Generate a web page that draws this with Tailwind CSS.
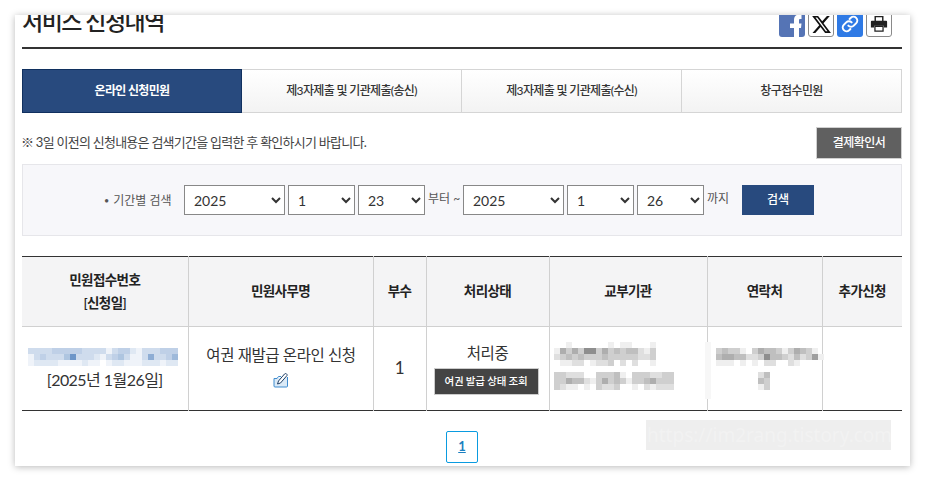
<!DOCTYPE html>
<html lang="ko">
<head>
    <meta charset="UTF-8">
    <title>서비스 신청내역</title>
    <script src="https://cdn.jsdelivr.net/npm/@tailwindcss/browser@4"></script>
</head>
<body class="bg-white w-[925px] h-[481px] overflow-hidden pt-[15px] pl-[15px] font-['Lato','Noto_Sans_CJK_KR',sans-serif] text-[#333]">
    <div class="relative w-[895px] h-[451px] overflow-hidden bg-white pl-[7px] pr-[8px] shadow-[0_1px_7px_rgba(0,0,0,0.28)]">

        <!-- Title and share icons -->
        <div class="flex justify-between h-[34px] border-b-2 border-[#333]">
            <h2 class="-mt-[11px] text-[23px] leading-[35px] font-medium tracking-[-1.5px] text-[#222]">서비스 신청내역</h2>
            <div class="flex gap-[3px] -mt-[4px] mr-[10px] h-[26px]">
                <div class="w-[26px] h-[26px] rounded-[3px] bg-[#5574b5] overflow-hidden">
                    <svg viewBox="0 0 26 26" class="w-[26px] h-[26px]"><path fill="#fff" d="M15 26V17h-4v-4.500h4V9c0-3.500 2-5.500 5-5.500h2.500V8h-1.500c-.8 0-1 .6-1 1.500v3h2.500l-.5 4.500h-2v9z"/></svg>
                </div>
                <div class="w-[26px] h-[26px] rounded-[3px] border border-[#8a8a8a] bg-white flex items-center justify-center">
                    <svg viewBox="0 0 24 24" class="w-[21px] h-[21px]"><path fill="#111" d="M18.200 2.200h3.300l-7.200 8.300 8.500 11.200h-6.700l-5.200-6.800-6 6.800H1.700l7.700-8.800L1.300 2.200h6.800l4.700 6.200zm-1.200 17.500h1.800L7.100 4.100H5.100z"/></svg>
                </div>
                <div class="w-[26px] h-[26px] rounded-[3px] bg-[#2f7ae5] flex items-center justify-center">
                    <svg viewBox="0 0 24 24" class="w-[20px] h-[20px]" fill="none" stroke="#fff" stroke-width="2.400" stroke-linecap="round"><path d="M10 14a4.500 4.500 0 0 0 6.500 0l3-3a4.600 4.600 0 0 0-6.500-6.500l-1.500 1.500"/><path d="M14 10a4.500 4.500 0 0 0-6.500 0l-3 3a4.600 4.600 0 0 0 6.500 6.500l1.500-1.500"/></svg>
                </div>
                <div class="w-[26px] h-[26px] rounded-[3px] border border-[#8a8a8a] bg-white flex items-center justify-center">
                    <svg viewBox="0 0 20 20" class="w-[18px] h-[18px]"><path fill="none" stroke="#222" stroke-width="1.600" d="M5.800 7V1.800h8.400V7"/><path fill="#222" d="M2 6.500h16a1 1 0 0 1 1 1v6.500h-3.500v-2h-11v2H1V7.500a1 1 0 0 1 1-1z"/><path fill="#fff" stroke="#222" stroke-width="1.400" d="M5.500 12.500h9v5.500h-9z"/></svg>
                </div>
            </div>
        </div>

        <!-- Tabs -->
        <div class="flex mt-[20px] h-[44px] text-[12px] tracking-[-0.65px] font-medium">
            <a class="w-[220px] flex items-center justify-center bg-[#284a7e] border border-[#10305f] text-white font-bold">온라인 신청민원</a>
            <a class="w-[220px] flex items-center justify-center border-y border-r border-[#d5d5d5] bg-gradient-to-b from-white to-[#f3f3f3]">제3자제출 및 기관제출(송신)</a>
            <a class="w-[220px] flex items-center justify-center border-y border-r border-[#d5d5d5] bg-gradient-to-b from-white to-[#f3f3f3]">제3자제출 및 기관제출(수신)</a>
            <a class="w-[220px] flex items-center justify-center border-y border-r border-[#d5d5d5] bg-gradient-to-b from-white to-[#f3f3f3]">창구접수민원</a>
        </div>

        <!-- Notice -->
        <div class="flex justify-between items-center mt-[14px] h-[32px]">
            <p class="-ml-[1px] text-[13px] tracking-[-0.74px] text-[#444]">※ 3일 이전의 신청내용은 검색기간을 입력한 후 확인하시기 바랍니다.</p>
            <button class="w-[86px] h-[32px] bg-[#606060] border border-[#d0d0d0] text-white text-[12px] font-medium tracking-[-0.5px]">결제확인서</button>
        </div>

        <!-- Period search -->
        <div class="flex items-center mt-[5px] h-[72px] pl-[80px] bg-[#f7f7fa] border border-[#e6e6ea] text-[12px] text-[#555]">
            <span class="w-[81px] pl-[1px] pt-[1px]"><span class="text-[9px] align-[1px] mr-[4px]">•</span>기간별 검색</span>
            <select class="w-[101px] h-[30px] pl-[5px] border border-[#888] bg-white text-[14px] text-[#333]"><option>2025</option></select>
            <select class="w-[67px] h-[30px] ml-[3px] pl-[5px] border border-[#888] bg-white text-[14px] text-[#333]"><option>1</option></select>
            <select class="w-[67px] h-[30px] ml-[3px] pl-[5px] border border-[#888] bg-white text-[14px] text-[#333]"><option>23</option></select>
            <span class="w-[38px] pl-[3px] -mt-[2px]">부터 ~</span>
            <select class="w-[101px] h-[30px] pl-[5px] border border-[#888] bg-white text-[14px] text-[#333]"><option>2025</option></select>
            <select class="w-[67px] h-[30px] ml-[3px] pl-[5px] border border-[#888] bg-white text-[14px] text-[#333]"><option>1</option></select>
            <select class="w-[67px] h-[30px] ml-[3px] pl-[5px] border border-[#888] bg-white text-[14px] text-[#333]"><option>26</option></select>
            <span class="w-[38px] pl-[3px] -mt-[2px]">까지</span>
            <button class="w-[72px] h-[30px] bg-[#284a7e] text-white text-[12px] font-medium">검색</button>
        </div>

        <!-- Result table -->
        <table class="mt-[20px] w-[880px] table-fixed border-collapse border-t border-b border-t-[#333] border-b-[#333] text-center">
            <colgroup>
                <col class="w-[166px]"><col class="w-[185px]"><col class="w-[53px]"><col class="w-[123px]"><col class="w-[158px]"><col class="w-[115px]"><col class="w-[80px]">
            </colgroup>
            <thead>
                <tr class="h-[70px] bg-[#f4f4f5] text-[13.5px] leading-[23px] tracking-[-0.6px] text-[#222]">
                    <th class="font-semibold border-b border-r border-[#d0d0d0]">민원접수번호<br>[신청일]</th>
                    <th class="font-semibold border-b border-r border-[#d0d0d0]">민원사무명</th>
                    <th class="font-semibold border-b border-r border-[#d0d0d0]">부수</th>
                    <th class="font-semibold border-b border-r border-[#d0d0d0]">처리상태</th>
                    <th class="font-semibold border-b border-r border-[#d0d0d0]">교부기관</th>
                    <th class="font-semibold border-b border-r border-[#d0d0d0]">연락처</th>
                    <th class="font-semibold border-b border-[#d0d0d0]">추가신청</th>
                </tr>
            </thead>
            <tbody>
                <tr class="h-[83px] text-[15.5px] tracking-[-0.4px]">
                    <td class="border-r border-[#d0d0d0] align-top">
                        <div class="relative h-[83px]">
                            <svg id="mosaic-no" class="absolute left-[6px] top-[21px]" width="152" height="18" shape-rendering="crispEdges"></svg>
                            <p class="absolute inset-x-0 top-[42px] leading-[22px] text-[16px] tracking-[-0.55px]">[2025년 1월26일]</p>
                        </div>
                    </td>
                    <td class="border-r border-[#d0d0d0] pl-[1px]">
                        <p class="leading-[22px] -mt-[5px]">여권 재발급 온라인 신청</p>
                        <svg viewBox="0 0 16 16" class="w-[16px] h-[16px] mx-auto mt-[6px]" fill="none">
                            <path d="M1 6.500h3l1.500-2H8M1 6.500V14a1 1 0 0 0 1 1h11.500a1 1 0 0 0 1-1V5" stroke="#3f8ccf" fill="#dbeaf7"/>
                            <path d="M4.500 12l1-3L11.500 2c1-1 3-.2 2.500 1.500L7.500 11z" fill="#fff" stroke="#1f3f66"/>
                        </svg>
                    </td>
                    <td class="border-r border-[#d0d0d0] text-[17px] pb-[2px]">1</td>
                    <td class="border-r border-[#d0d0d0]">
                        <p class="leading-[22px]">처리중</p>
                        <button class="block ml-[7px] mt-[4px] w-[105px] h-[27px] bg-[#444] border border-[#ccc] text-white text-[10.5px] font-medium tracking-[-0.2px]">여권 발급 상태 조회</button>
                    </td>
                    <td class="border-r border-[#d0d0d0] align-top">
                        <div class="relative h-[83px]"><svg id="mosaic-org" class="absolute left-[4px] top-[15px]" width="126" height="48" shape-rendering="crispEdges"></svg></div>
                    </td>
                    <td class="border-r border-[#d0d0d0] align-top">
                        <div class="relative h-[83px]">
                            <span class="absolute -left-[3px] top-[15px] w-[6px] h-[57px] bg-[#f7f7f7]"></span>
                            <svg id="mosaic-tel" class="absolute left-[8px] top-[15px]" width="108" height="48" shape-rendering="crispEdges"></svg>
                        </div>
                    </td>
                    <td></td>
                </tr>
            </tbody>
        </table>

        <!-- Pagination -->
        <div class="flex justify-center mt-[20px]">
            <a class="w-[32px] h-[32px] flex items-center justify-center rounded-[2px] border border-[#0a9be0] text-[#1a7fc0] text-[13px] font-bold underline">1</a>
        </div>

        <!-- Blog watermark -->
        <div class="absolute left-[631px] top-[405px] w-[245px] h-[30px] bg-[#eeeeee] text-[#f2f2f2] text-[19px] leading-[30px] font-['Noto_Sans',sans-serif] whitespace-nowrap overflow-hidden pl-[1px]">https://im2rang.tistory.com</div>
    </div>

    <script>
        // blurred personal data, one digit per 6px cell (0 = white, 9 = darkest)
        function mosaic(id, rows, dark) {
            const svg = document.getElementById(id);
            let html = '';
            rows.forEach((row, y) => {
                [...row].forEach((cell, x) => {
                    if (cell === ' ' || cell === '0') return;
                    const t = Number(cell) / 9;
                    const c = dark.map(v => Math.round(255 + (v - 255) * t));
                    html += `<rect x="${x * 6}" y="${y * 6}" width="6" height="6" fill="rgb(${c})"/>`;
                });
            });
            svg.innerHTML = html;
        }
        mosaic('mosaic-no', [
            '3333444443333134421333444',
            '1343335933321345311373346',
            '1222211112110122111222122'
        ], [110, 150, 200]);
        mosaic('mosaic-org', [
            '00100000010110001',
            '15353773534344213',
            '23434333433333223',
            '01122012230202001',
            '0',
            '33222003334103332233',
            '33544213534313345333',
            '32110103223001021222'
        ], [110, 110, 110]);
        mosaic('mosaic-tel', [
            '0',
            '343310354431354310',
            '455442237443242361',
            '111010102200210000',
            '0',
            '000000024',
            '000000043',
            '000000013'
        ], [110, 110, 110]);
    </script>
</body>
</html>
